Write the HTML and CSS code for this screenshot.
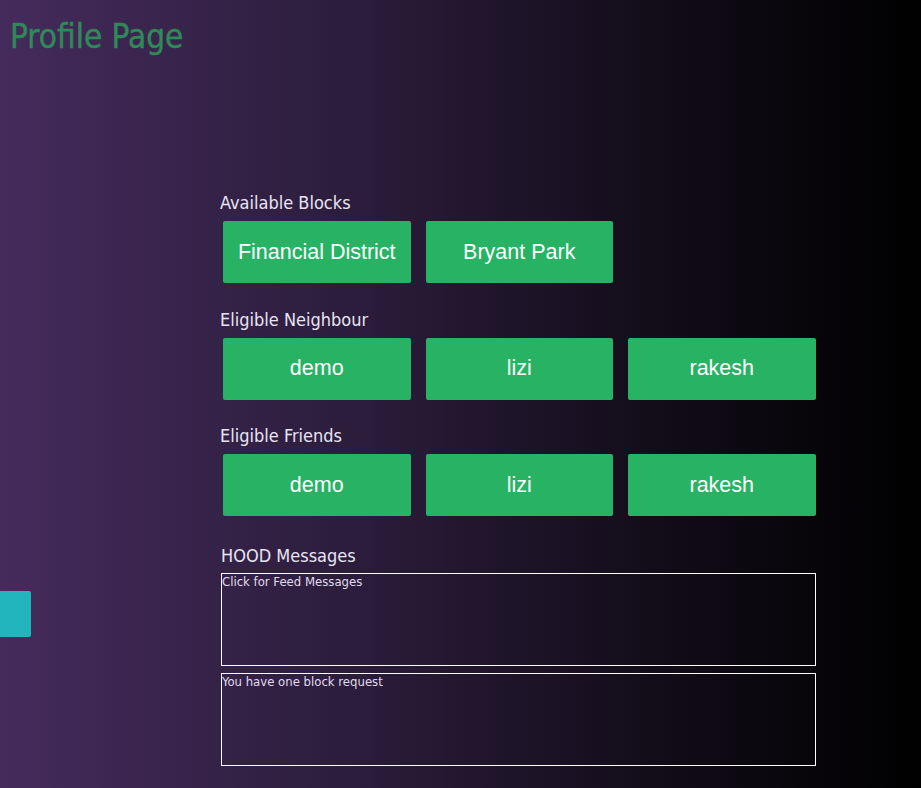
FILE: index.html
```html
<!DOCTYPE html>
<html>
<head>
<meta charset="utf-8">
<title>Profile Page</title>
<link rel="stylesheet" href="styles.css">
</head>
<body>
<header class="top">
  <h1 class="title">Profile Page</h1>
</header>
<div class="side-toggle"></div>
<main class="content">
  <section class="group">
    <h2 class="label">Available Blocks</h2>
    <div class="btn-row">
      <button class="btn">Financial District</button>
      <button class="btn">Bryant Park</button>
    </div>
  </section>
  <section class="group">
    <h2 class="label">Eligible Neighbour</h2>
    <div class="btn-row">
      <button class="btn">demo</button>
      <button class="btn">lizi</button>
      <button class="btn">rakesh</button>
    </div>
  </section>
  <section class="group">
    <h2 class="label">Eligible Friends</h2>
    <div class="btn-row">
      <button class="btn">demo</button>
      <button class="btn">lizi</button>
      <button class="btn">rakesh</button>
    </div>
  </section>
  <section class="messages">
    <h2 class="label">HOOD Messages</h2>
    <div class="msg-box">Click for Feed Messages</div>
    <div class="msg-box">You have one block request</div>
  </section>
</main>
</body>
</html>
```
FILE: styles.css
```css
html, body {
  margin: 0;
  padding: 0;
  height: 100%;
}
body {
  background: linear-gradient(to right, #452b5c 0%, #2a1c3a 40%, #120c18 72%, #000000 100%);
  font-family: "DejaVu Sans Condensed", "DejaVu Sans", sans-serif;
  font-stretch: condensed;
  color: #e6e3f2;
  position: relative;
  overflow: hidden;
}
.top {
  padding: 17px 0 0 10px;
  height: 190px;
  box-sizing: border-box;
}
.title {
  margin: 0;
  font-size: 33px;
  font-weight: normal;
  color: #2f8a58;
  line-height: 40px;
  -webkit-text-stroke: 0.4px #2f8a58;
}
.side-toggle {
  position: absolute;
  left: 0;
  top: 591px;
  width: 31px;
  height: 46px;
  background: #23b5be;
  border-radius: 0 2px 2px 0;
}
.content {
  margin-left: 220px;
  width: 597px;
  display: flex;
  flex-direction: column;
}
.group {
  margin-bottom: 23.5px;
}
.label {
  margin: 0;
  font-size: 18px;
  font-weight: normal;
  line-height: 26px;
  height: 31px;
  color: #e8e4f4;
}
.btn-row {
  display: flex;
  gap: 15px;
  padding-left: 3px;
}
.btn {
  width: 187.5px;
  height: 62px;
  background: #27b264;
  border: none;
  border-radius: 2px;
  color: #ffffff;
  font-family: "Liberation Sans", Arial, sans-serif;
  font-size: 21.5px;
  padding: 0;
}
.messages {
  margin-top: 3px;
}
.messages .label {
  height: 30px;
  padding-left: 1px;
}
.msg-box {
  width: 593px;
  height: 91px;
  margin-left: 1px;
  border: 1px solid #ffffff;
  font-size: 13px;
  line-height: 16px;
  color: #e0dced;
  margin-bottom: 7px;
}
```
